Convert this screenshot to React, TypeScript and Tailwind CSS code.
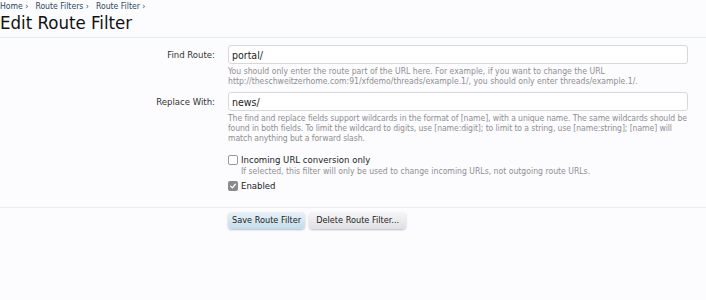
export default function App() {
  return (
    <div className="min-h-[300px] w-[706px] bg-[#fcfcff] text-[#222] overflow-hidden" style={{ fontFamily: '"DejaVu Sans Condensed", "DejaVu Sans", sans-serif' }}>
      {/* Breadcrumb */}
      <div className="flex h-[13px] items-center text-[8.6px] text-[#2b485c] leading-none">
        <span>Home ›</span>
        <span className="ml-[7px]">Route Filters ›</span>
        <span className="ml-[7px]">Route Filter ›</span>
      </div>
      <h1 className="text-[18.5px] leading-[20px] font-normal text-[#111]">Edit Route Filter</h1>
      <div className="mt-[4px] border-t border-[#e3edf3]" />

      <form className="pt-[7px]">
        {/* Find Route */}
        <div className="flex">
          <label className="w-[218px] pr-[3px] text-right text-[9.5px] leading-[19px] text-[#333]">Find Route:</label>
          <div className="ml-[10px] w-[460px]">
            <input
              defaultValue="portal/"
              className="block h-[19px] w-full rounded-[3px] border border-[#d8d8d8] bg-white px-[3px] text-[10.5px] text-[#222] outline-none"
              style={{ fontFamily: 'inherit' }}
            />
            <p className="mt-[2px] whitespace-nowrap text-[8.6px] leading-[10px] text-[#8f8f8f]">
              You should only enter the route part of the URL here. For example, if you want to change the URL
              <br />
              http://theschweitzerhome.com:91/xfdemo/threads/example.1/, you should only enter threads/example.1/.
            </p>
          </div>
        </div>

        {/* Replace With */}
        <div className="mt-[6px] flex">
          <label className="w-[218px] pr-[3px] text-right text-[9.5px] leading-[19px] text-[#333]">Replace With:</label>
          <div className="ml-[10px] w-[460px]">
            <input
              defaultValue="news/"
              className="block h-[19px] w-full rounded-[3px] border border-[#d8d8d8] bg-white px-[3px] text-[10.5px] text-[#222] outline-none"
              style={{ fontFamily: 'inherit' }}
            />
            <p className="mt-[2px] whitespace-nowrap text-[8.6px] leading-[10px] tracking-[-0.1px] text-[#8f8f8f]">
              The find and replace fields support wildcards in the format of [name], with a unique name. The same wildcards should be
              <br />
              found in both fields. To limit the wildcard to digits, use [name:digit]; to limit to a string, use [name:string]; [name] will
              <br />
              match anything but a forward slash.
            </p>
          </div>
        </div>

        {/* Options */}
        <div className="ml-[228px] mt-[10px]">
          <label className="flex items-center gap-[3px] text-[9.5px] leading-[13px] text-[#222]">
            <span className="h-[10px] w-[10px] rounded-[2px] border border-[#999] bg-white" />
            Incoming URL conversion only
          </label>
          <p className="ml-[13px] text-[8.6px] leading-[11px] text-[#8f8f8f]">
            If selected, this filter will only be used to change incoming URLs, not outgoing route URLs.
          </p>
          <label className="mt-[2px] flex items-center gap-[3px] text-[9.5px] leading-[13px] text-[#222]">
            <span className="flex h-[10px] w-[10px] items-center justify-center rounded-[2px] bg-[#8a8a8a]">
              <svg viewBox="0 0 10 10" className="h-[8px] w-[8px]">
                <path d="M2 5.2 L4.2 7.3 L8 2.8" fill="none" stroke="#fff" strokeWidth="1.6" strokeLinecap="round" strokeLinejoin="round" />
              </svg>
            </span>
            Enabled
          </label>
        </div>

        <div className="mt-[15px] border-t border-[#e3edf3]" />

        <div className="ml-[228px] mt-[4px] flex gap-[4px]">
          <button
            type="button"
            className="h-[17px] rounded-[4px] bg-gradient-to-b from-[#e8f2f9] to-[#c3dcea] px-[4px] text-[9.1px] leading-none text-[#222] shadow-[0_1px_2px_rgba(0,0,0,0.25)]"
            style={{ fontFamily: 'inherit' }}
          >
            Save Route Filter
          </button>
          <button
            type="button"
            className="h-[17px] rounded-[4px] bg-gradient-to-b from-[#f6f6f8] to-[#e0e0e4] px-[7px] text-[9.1px] leading-none text-[#222] shadow-[0_1px_2px_rgba(0,0,0,0.25)]"
            style={{ fontFamily: 'inherit' }}
          >
            Delete Route Filter...
          </button>
        </div>
      </form>
    </div>
  )
}
